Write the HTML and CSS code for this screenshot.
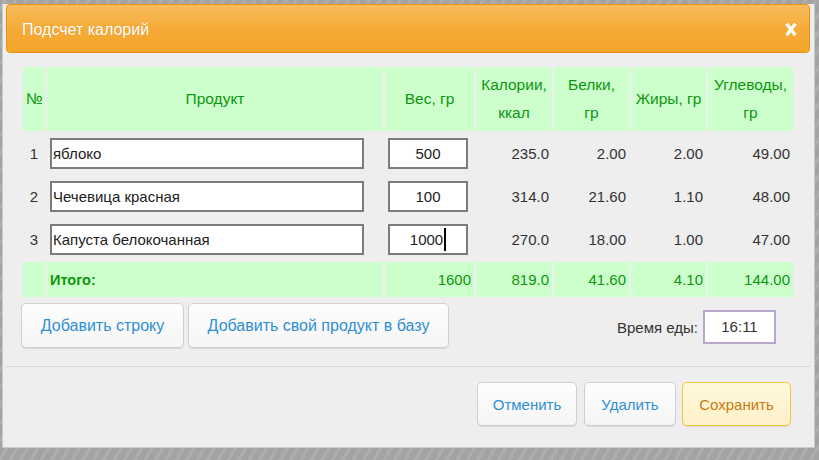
FILE: index.html
```html
<!DOCTYPE html>
<html lang="ru">
<head>
<meta charset="utf-8">
<title>Подсчет калорий</title>
<link rel="stylesheet" href="styles.css">
</head>
<body>
<div class="dialog">
  <div class="titlebar">
    <span class="title">Подсчет калорий</span>
    <svg class="close" width="12" height="15" viewBox="0 0 12 15" aria-label="Закрыть"><path d="M1.6 1.8 L10.4 13.2 M10.4 1.8 L1.6 13.2" stroke="#fff" stroke-width="3.3" fill="none"/></svg>
  </div>
  <div class="content">
    <table class="calc">
      <thead>
        <tr>
          <th class="c-num">№</th>
          <th class="c-name">Продукт</th>
          <th class="c-w">Вес, гр</th>
          <th class="c-kcal">Калории,<br>ккал</th>
          <th class="c-p">Белки,<br>гр</th>
          <th class="c-f">Жиры, гр</th>
          <th class="c-c">Углеводы,<br>гр</th>
        </tr>
      </thead>
      <tbody>
        <tr>
          <td class="num">1</td>
          <td class="name"><div class="field">яблоко</div></td>
          <td class="weight"><div class="field center">500</div></td>
          <td>235.0</td><td>2.00</td><td>2.00</td><td>49.00</td>
        </tr>
        <tr>
          <td class="num">2</td>
          <td class="name"><div class="field">Чечевица красная</div></td>
          <td class="weight"><div class="field center">100</div></td>
          <td>314.0</td><td>21.60</td><td>1.10</td><td>48.00</td>
        </tr>
        <tr>
          <td class="num">3</td>
          <td class="name"><div class="field">Капуста белокочанная</div></td>
          <td class="weight"><div class="field center">1000<span class="caret"></span></div></td>
          <td>270.0</td><td>18.00</td><td>1.00</td><td>47.00</td>
        </tr>
      </tbody>
      <tfoot>
        <tr class="total">
          <td></td>
          <td class="label">Итого:</td>
          <td>1600</td><td>819.0</td><td>41.60</td><td>4.10</td><td>144.00</td>
        </tr>
      </tfoot>
    </table>
    <div class="tools">
      <button class="btn btn-add">Добавить строку</button>
      <button class="btn btn-own">Добавить свой продукт в базу</button>
      <div class="time">
        <span class="time-label">Время еды:</span>
        <span class="time-field">16:11</span>
      </div>
    </div>
  </div>
  <div class="sep"></div>
  <div class="footer">
    <button class="btn btn-cancel">Отменить</button>
    <button class="btn btn-delete">Удалить</button>
    <button class="btn btn-save">Сохранить</button>
  </div>
</div>
</body>
</html>
```

FILE: styles.css
```css
html, body {
  margin: 0;
  padding: 0;
}

body {
  width: 819px;
  height: 460px;
  overflow: hidden;
  background: repeating-linear-gradient(-60deg, #a3a3a3 0 6px, #adadad 6px 9px);
  font-family: "Liberation Sans", Arial, sans-serif;
  font-size: 15px;
  color: #333;
}

.dialog {
  margin-left: 2px;
  width: 813px;
  box-sizing: border-box;
  background: #eeeeee;
  border: 1px solid #c9c9c9;
  border-top: none;
}

.titlebar {
  margin: 4px 4px 0 3px;
  height: 49px;
  box-sizing: border-box;
  border: 1px solid #e8920f;
  border-radius: 4px;
  background: linear-gradient(#f8bc5c, #f5aa35 55%, #f4a62c);
  display: flex;
  align-items: center;
  justify-content: space-between;
  padding: 0 12px 0 15px;
}

.title {
  color: #fff;
  font-size: 16px;
  padding-top: 2px;
  text-shadow: 0 0 1px rgba(150, 80, 0, 0.3);
}

.close {
  display: block;
  margin-top: 2px;
}

.content {
  padding: 12px 19px 0 18px;
}

.calc {
  border-collapse: separate;
  border-spacing: 2px;
  table-layout: fixed;
  width: 774px;
}

.calc th,
.calc td {
  box-sizing: border-box;
  padding: 0 3px;
}

.calc th {
  height: 64px;
  background: #ccffcc;
  color: #0e960e;
  font-weight: normal;
  font-size: 15.5px;
  line-height: 28px;
  text-align: center;
  vertical-align: middle;
}

.c-num { width: 22px; }
.c-name { width: 336px; }
.c-w { width: 89px; }
.c-kcal { width: 76px; }
.c-p { width: 75px; }
.c-f { width: 75px; }
.c-c { width: 85px; }

.calc thead th.c-num {
  padding: 0;
}

.calc tbody td {
  height: 41px;
  text-align: right;
  vertical-align: middle;
}

.calc tbody td.num {
  text-align: center;
  padding: 0;
}

.calc tbody td.name,
.calc tbody td.weight {
  text-align: left;
}

.field {
  height: 31px;
  box-sizing: border-box;
  border: 2px solid #7b7b7b;
  background: #fff;
  color: #222;
  line-height: 27px;
  padding: 0 1px;
  white-space: nowrap;
  overflow: hidden;
}

.name .field {
  width: 314px;
}

.weight .field {
  width: 80px;
}

.field.center {
  text-align: center;
}

.caret {
  display: inline-block;
  width: 2px;
  height: 23px;
  background: #000;
  vertical-align: middle;
  margin-left: 1px;
  margin-top: -3px;
}

.total td {
  height: 35px;
  background: #ccffcc;
  color: #0e960e;
  text-align: right;
  vertical-align: middle;
}

.total td.label {
  text-align: left;
  font-weight: bold;
  font-size: 14.5px;
}

.tools {
  display: flex;
  align-items: center;
  margin-top: 4px;
  gap: 4px;
}

.btn {
  font-family: inherit;
  font-size: 16px;
  color: #2f8fd5;
  background: linear-gradient(#fdfdfd, #f5f5f5);
  border: 1px solid #cfcfcf;
  border-radius: 5px;
  box-shadow: 0 1px 0 #d8d8d8;
  padding: 0;
  height: 45px;
  cursor: pointer;
}

.btn-add { width: 163px; }
.btn-own { width: 261px; }

.time {
  margin-left: auto;
  display: flex;
  align-items: center;
  gap: 5px;
  padding-top: 3px;
  margin-right: 19px;
}

.time-label {
  color: #333;
}

.time-field {
  width: 73px;
  height: 34px;
  box-sizing: border-box;
  border: 2px solid #b7a7cb;
  background: #fff;
  color: #333;
  text-align: center;
  line-height: 30px;
}

.sep {
  margin: 18px 3px 0 3px;
  height: 1px;
  background: #d6d6d6;
}

.footer {
  display: flex;
  justify-content: flex-end;
  padding: 15px 23px 21px 0;
}

.footer .btn {
  height: 44px;
  font-size: 15px;
  margin-left: 6px;
}

.btn-cancel { width: 100px; }
.btn-delete { width: 92px; margin-left: 7px !important; }
.btn-save {
  width: 109px;
  color: #c97a14;
  background: linear-gradient(#fff8dc, #fff1c8);
  border-color: #f6c63a;
}
```
